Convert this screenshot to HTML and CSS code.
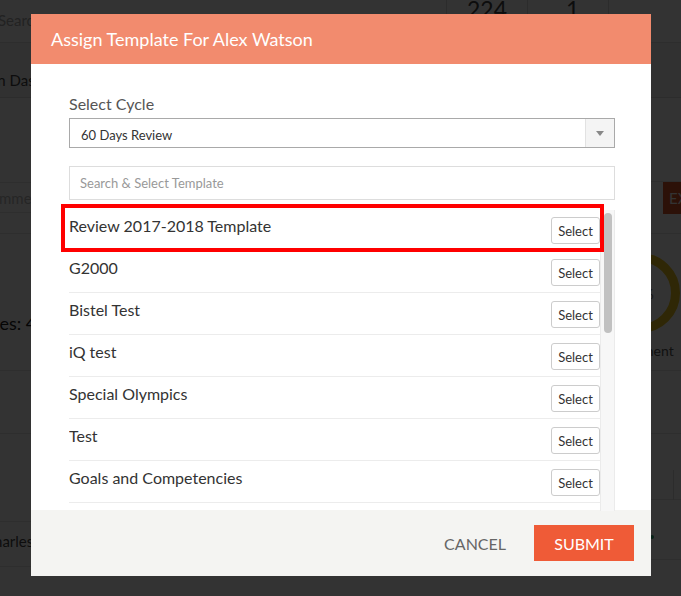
FILE: index.html
```html
<!DOCTYPE html>
<html lang="en">
<head>
<meta charset="utf-8">
<title>Assign Template</title>
<link rel="stylesheet" href="styles.css">
</head>
<body>
<div class="page">
  <header class="topbar">
    <div class="top-search">Search</div>
    <div class="stat">224</div>
    <div class="stat">1</div>
    <div class="stat stat-last"></div>
  </header>
  <div class="subbar"><span class="crumb">Admin Dashboard</span></div>
  <div class="content">
    <div class="col-main">
      <div class="m-row m1"></div>
      <div class="m-row m2"><span class="ghost">Add Comment</span></div>
      <div class="m-row m3"></div>
      <div class="m-row m4"><span class="count">Total Employees: 4</span></div>
      <div class="m-row m5"></div>
      <div class="m-row m6"></div>
      <div class="m-row m7"><span class="name">Charles</span></div>
    </div>
    <aside class="col-side">
      <div class="s-row s1"></div>
      <div class="s-row s2"><span class="export">EXPORT</span></div>
      <div class="s-row s3">
        <div class="donut"><span>50%</span></div>
        <span class="donut-label">Assignment</span>
      </div>
      <div class="s-row s4"></div>
      <div class="s-row s5"><div class="mini"></div></div>
      <div class="s-row s6"><span class="dot"></span></div>
    </aside>
  </div>
</div>

<div class="backdrop">
  <div class="modal">
    <div class="modal-header">Assign Template For Alex Watson</div>
    <div class="modal-body">
      <div class="field-label">Select Cycle</div>
      <div class="select">
        <span class="select-value">60 Days Review</span>
        <span class="select-arrow"><span class="caret"></span></span>
      </div>
      <div class="search">Search &amp; Select Template</div>
      <div class="list-wrap">
        <ul class="list">
          <li class="row"><span class="row-name">Review 2017-2018 Template</span><button class="btn-select">Select</button></li>
          <li class="row"><span class="row-name">G2000</span><button class="btn-select">Select</button></li>
          <li class="row"><span class="row-name">Bistel Test</span><button class="btn-select">Select</button></li>
          <li class="row"><span class="row-name">iQ test</span><button class="btn-select">Select</button></li>
          <li class="row"><span class="row-name">Special Olympics</span><button class="btn-select">Select</button></li>
          <li class="row"><span class="row-name">Test</span><button class="btn-select">Select</button></li>
          <li class="row"><span class="row-name">Goals and Competencies</span><button class="btn-select">Select</button></li>
          <li class="row"><span class="row-name">Annual Review</span><button class="btn-select">Select</button></li>
          <li class="row"><span class="row-name">Mid Year Review</span><button class="btn-select">Select</button></li>
        </ul>
        <div class="scroll-track"><div class="scroll-thumb"></div></div>
        <div class="highlight"></div>
      </div>
    </div>
    <div class="modal-footer">
      <button class="btn-cancel">CANCEL</button>
      <button class="btn-submit">SUBMIT</button>
    </div>
  </div>
</div>
</body>
</html>
```

FILE: styles.css
```css
* { box-sizing: border-box; }

html, body {
  margin: 0;
  padding: 0;
  height: 100%;
  overflow: hidden;
}

body {
  font-family: Lato, "Open Sans", "Liberation Sans", sans-serif;
  background: #ffffff;
  color: #333333;
}

/* ---------- background page ---------- */
.page {
  width: 681px;
  height: 596px;
  overflow: hidden;
}

.topbar {
  display: flex;
  height: 43px;
  border-bottom: 1px solid #e2e2e2;
}

.top-search {
  width: 448px;
  font-size: 15px;
  line-height: 40px;
  color: #aaaaaa;
  margin-left: -2px;
}

.stat {
  width: 81px;
  border-left: 1px solid #dddddd;
  font-size: 23px;
  line-height: 18px;
  padding-left: 20px;
  color: #444444;
  overflow: hidden;
}

.stat + .stat { padding-left: 38px; }
.stat-last { flex: 1; }

.subbar {
  height: 55px;
  background: #f3f3f3;
  border-bottom: 1px solid #dddddd;
  padding-top: 28px;
}

.crumb {
  display: block;
  margin-left: -37px;
  font-size: 15px;
  color: #444444;
}

.content {
  display: grid;
  grid-template-columns: 600px 81px;
}

.m-row, .s-row {
  border-bottom: 1px solid #e4e4e4;
}

.m1 { height: 85px; }
.m2 { height: 30px; padding-top: 6px; }
.m3 { height: 21px; }
.m4 { height: 137px; padding-top: 78px; }
.m5 { height: 63px; }
.m6 { height: 88px; }
.m7 { height: 45px; padding-top: 10px; }

.ghost {
  display: block;
  margin-left: -50px;
  font-size: 15px;
  color: #bbbbbb;
}

.count {
  display: block;
  margin-left: -111px;
  font-size: 18px;
  color: #222222;
}

.name {
  display: block;
  margin-left: -16px;
  font-size: 15px;
  color: #444444;
}

.s1 { height: 84px; }
.s2 { height: 52px; padding-left: 63px; }
.s3 {
  height: 137px;
  padding-top: 19px;
  display: flex;
  flex-direction: column;
  align-items: flex-start;
}
.s4 { height: 63px; }
.s5 { height: 66px; padding: 36px 0 0 73px; }
.s6 { height: 60px; padding: 35px 0 0 50px; }

.export {
  display: block;
  width: 80px;
  height: 32px;
  background: #d9542a;
  color: #ffffff;
  font-size: 15px;
  line-height: 32px;
  padding-left: 6px;
}

.donut {
  width: 80px;
  height: 80px;
  border-radius: 50%;
  border: 9px solid #e8c21e;
  display: flex;
  align-items: center;
  justify-content: center;
  font-size: 14px;
  color: #666666;
}

.donut-label {
  margin-top: 9px;
  margin-left: 2px;
  font-size: 14px;
  color: #555555;
}

.mini {
  width: 8px;
  height: 30px;
  border-left: 1px solid #dddddd;
}

.dot {
  display: block;
  width: 4px;
  height: 4px;
  border-radius: 50%;
  background: #27a36f;
}

/* ---------- modal ---------- */
.backdrop {
  position: fixed;
  inset: 0;
  background: rgba(0, 0, 0, 0.8);
  display: flex;
  justify-content: center;
  align-items: flex-start;
  padding: 14px 0 0 1px;
}

.modal {
  width: 620px;
  background: #ffffff;
}

.modal-header {
  height: 50px;
  background: #f28b6e;
  color: #ffffff;
  font-size: 18px;
  line-height: 50px;
  padding-left: 20px;
}

.modal-body {
  padding: 30px 36px 0 38px;
}

.field-label {
  font-size: 16px;
  line-height: 20px;
  color: #555555;
  margin-bottom: 4px;
}

.select {
  display: flex;
  height: 30px;
  border: 1px solid #a9a9a9;
}

.select-value {
  flex: 1;
  font-size: 13px;
  line-height: 28px;
  padding: 2px 0 0 11px;
  color: #333333;
}

.select-arrow {
  width: 29px;
  background: #f4f4f4;
  border-left: 1px solid #e2e2e2;
  display: flex;
  align-items: center;
  justify-content: center;
}

.caret {
  width: 0;
  height: 0;
  border-left: 4px solid transparent;
  border-right: 4px solid transparent;
  border-top: 5px solid #888888;
}

.search {
  margin-top: 18px;
  height: 34px;
  border: 1px solid #dddddd;
  font-size: 13px;
  line-height: 32px;
  padding-left: 10px;
  color: #999999;
}

.list-wrap {
  position: relative;
  margin-top: 9px;
  height: 301px;
  display: flex;
}

.list {
  flex: 1;
  list-style: none;
  margin: 0;
  padding: 0;
  height: 100%;
  overflow: hidden;
}

.row {
  display: flex;
  justify-content: space-between;
  align-items: flex-start;
  height: 42px;
  padding-top: 8px;
  border-bottom: 1px solid #ececec;
}

.row-name {
  font-size: 16px;
  line-height: 20px;
  margin-top: -1px;
  color: #333333;
}

.btn-select {
  width: 49px;
  height: 27px;
  padding: 0;
  border: 1px solid #cccccc;
  border-radius: 3px;
  background: #ffffff;
  font-family: inherit;
  font-size: 13px;
  color: #333333;
}

.scroll-track {
  width: 15px;
  height: 100%;
  margin-top: 1px;
  background: #f7f7f7;
  border-left: 1px solid #ebebeb;
  border-right: 1px solid #ebebeb;
  padding: 3px 0 0 3px;
}

.scroll-thumb {
  width: 8px;
  height: 120px;
  border-radius: 4px;
  background: #c1c1c1;
}

.highlight {
  position: absolute;
  top: -5px;
  left: -8px;
  width: 543px;
  height: 48px;
  border: 4px solid #ff0000;
}

.modal-footer {
  display: flex;
  justify-content: flex-end;
  align-items: center;
  height: 66px;
  padding: 0 17px;
  background: #f4f4f2;
}

.btn-cancel {
  border: none;
  background: none;
  padding: 0;
  margin-right: 28px;
  font-family: inherit;
  font-size: 16px;
  color: #666666;
}

.btn-submit {
  width: 100px;
  height: 36px;
  border: none;
  padding: 0;
  background: #ef5b37;
  color: #ffffff;
  font-family: inherit;
  font-size: 16px;
}
```
